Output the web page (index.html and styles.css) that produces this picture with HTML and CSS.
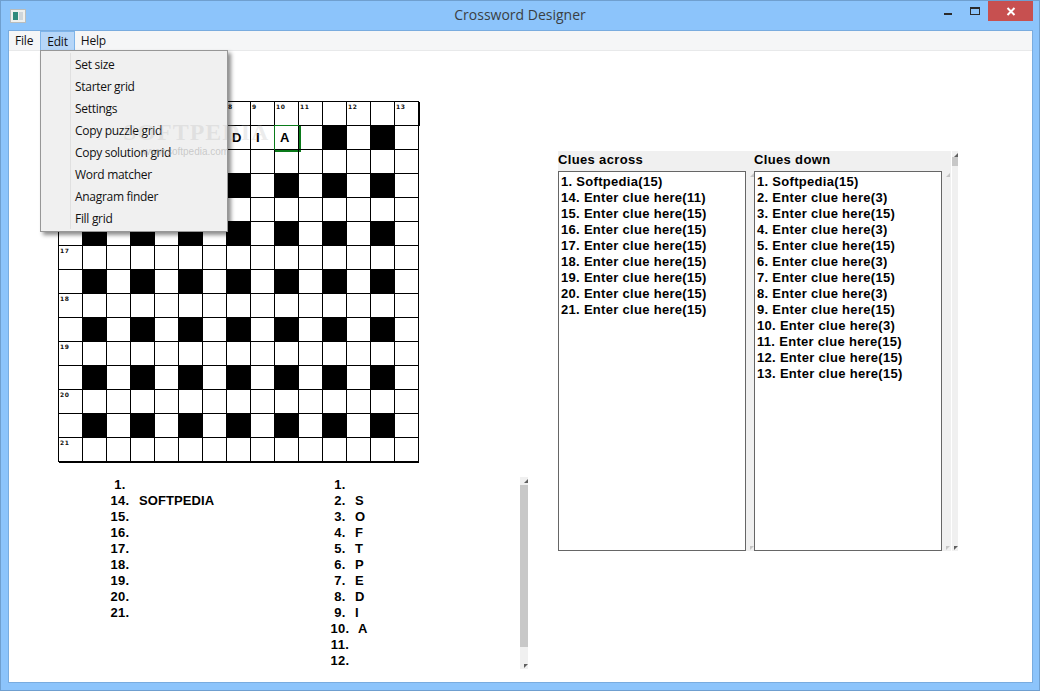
FILE: index.html
```html
<!DOCTYPE html>
<html lang="en">
<head>
<meta charset="utf-8">
<title>Crossword Designer</title>
<link rel="stylesheet" href="styles.css">
</head>
<body>
<div class="window">
  <header class="titlebar">
    <svg class="appicon" width="16" height="14" viewBox="0 0 16 14"><rect x=".5" y=".5" width="15" height="13" fill="#eef0ee" stroke="#b9bdbd"/><rect x="3" y="3" width="5" height="8" fill="#2f8a7c"/><rect x="9" y="3" width="4" height="8" fill="#cfd6da"/></svg>
    <div class="title">Crossword Designer</div>
    <div class="controls">
      <span class="ctl min"></span>
      <span class="ctl max"></span>
      <span class="ctl close"><svg width="10" height="9" viewBox="0 0 10 9"><path d="M1.5 1 8.5 8M8.5 1 1.5 8" stroke="#fff" stroke-width="2" fill="none"/></svg></span>
    </div>
  </header>
  <div class="client">
    <nav class="menubar">
      <span class="mi">File</span>
      <span class="mi active">Edit</span>
      <span class="mi">Help</span>
    </nav>
    <main class="canvas">
      <section class="leftcol">
        <div class="xw">
          <i><u>1</u></i><i><u>2</u></i><i><u>3</u></i><i><u>4</u></i><i><u>5</u></i><i><u>6</u></i><i><u>7</u></i><i><u>8</u></i><i><u>9</u></i><i><u>10</u></i><i><u>11</u></i><i></i><i><u>12</u></i><i></i><i class="edge"><u>13</u></i>
          <i class="top"><u>14</u></i><i class="top">S</i><i class="top">O</i><i class="top">F</i><i class="top">T</i><i class="top">P</i><i class="top">E</i><i class="top">D</i><i class="top">I</i><i class="top sel">A</i><i class="top"></i><i class="top k"></i><i class="top"></i><i class="top k"></i><i class="top"></i>
          <i><u>15</u></i><i></i><i></i><i></i><i></i><i></i><i></i><i></i><i></i><i></i><i></i><i></i><i></i><i></i><i></i>
          <i></i><i class="k"></i><i></i><i class="k"></i><i></i><i class="k"></i><i></i><i class="k"></i><i></i><i class="k"></i><i></i><i class="k"></i><i></i><i class="k"></i><i></i>
          <i><u>16</u></i><i></i><i></i><i></i><i></i><i></i><i></i><i></i><i></i><i></i><i></i><i></i><i></i><i></i><i></i>
          <i></i><i class="k"></i><i></i><i class="k"></i><i></i><i class="k"></i><i></i><i class="k"></i><i></i><i class="k"></i><i></i><i class="k"></i><i></i><i class="k"></i><i></i>
          <i><u>17</u></i><i></i><i></i><i></i><i></i><i></i><i></i><i></i><i></i><i></i><i></i><i></i><i></i><i></i><i></i>
          <i></i><i class="k"></i><i></i><i class="k"></i><i></i><i class="k"></i><i></i><i class="k"></i><i></i><i class="k"></i><i></i><i class="k"></i><i></i><i class="k"></i><i></i>
          <i><u>18</u></i><i></i><i></i><i></i><i></i><i></i><i></i><i></i><i></i><i></i><i></i><i></i><i></i><i></i><i></i>
          <i></i><i class="k"></i><i></i><i class="k"></i><i></i><i class="k"></i><i></i><i class="k"></i><i></i><i class="k"></i><i></i><i class="k"></i><i></i><i class="k"></i><i></i>
          <i><u>19</u></i><i></i><i></i><i></i><i></i><i></i><i></i><i></i><i></i><i></i><i></i><i></i><i></i><i></i><i></i>
          <i></i><i class="k"></i><i></i><i class="k"></i><i></i><i class="k"></i><i></i><i class="k"></i><i></i><i class="k"></i><i></i><i class="k"></i><i></i><i class="k"></i><i></i>
          <i><u>20</u></i><i></i><i></i><i></i><i></i><i></i><i></i><i></i><i></i><i></i><i></i><i></i><i></i><i></i><i></i>
          <i></i><i class="k"></i><i></i><i class="k"></i><i></i><i class="k"></i><i></i><i class="k"></i><i></i><i class="k"></i><i></i><i class="k"></i><i></i><i class="k"></i><i></i>
          <i class="last"><u>21</u></i><i class="last"></i><i class="last"></i><i class="last"></i><i class="last"></i><i class="last"></i><i class="last"></i><i class="last"></i><i class="last"></i><i class="last"></i><i class="last"></i><i class="last"></i><i class="last"></i><i class="last"></i><i class="last"></i>
        </div>
        <div class="answers">
          <div class="alist across">
            <span>1.</span><span></span>
            <span>14.</span><span>SOFTPEDIA</span>
            <span>15.</span><span></span>
            <span>16.</span><span></span>
            <span>17.</span><span></span>
            <span>18.</span><span></span>
            <span>19.</span><span></span>
            <span>20.</span><span></span>
            <span>21.</span><span></span>
          </div>
          <div class="alist down">
            <span>1.</span><span></span>
            <span>2.</span><span>S</span>
            <span>3.</span><span>O</span>
            <span>4.</span><span>F</span>
            <span>5.</span><span>T</span>
            <span>6.</span><span>P</span>
            <span>7.</span><span>E</span>
            <span>8.</span><span>D</span>
            <span>9.</span><span>I</span>
            <span>10.</span><span class="wide">A</span>
            <span>11.</span><span></span>
            <span>12.</span><span></span>
          </div>
          <div class="sb answersb"><b class="up"></b><b class="thumb"></b><b class="dn"></b></div>
        </div>
      </section>
      <section class="clues">
        <div class="cluecols">
          <div class="cluecol">
            <h2>Clues across</h2>
            <div class="cluewrap">
              <ul class="box">
                <li>1. Softpedia(15)</li>
                <li>14. Enter clue here(11)</li>
                <li>15. Enter clue here(15)</li>
                <li>16. Enter clue here(15)</li>
                <li>17. Enter clue here(15)</li>
                <li>18. Enter clue here(15)</li>
                <li>19. Enter clue here(15)</li>
                <li>20. Enter clue here(15)</li>
                <li>21. Enter clue here(15)</li>
              </ul>
              <div class="sb inner"><b class="up"></b><b class="dn"></b></div>
            </div>
          </div>
          <div class="cluecol">
            <h2>Clues down</h2>
            <div class="cluewrap">
              <ul class="box">
                <li>1. Softpedia(15)</li>
                <li>2. Enter clue here(3)</li>
                <li>3. Enter clue here(15)</li>
                <li>4. Enter clue here(3)</li>
                <li>5. Enter clue here(15)</li>
                <li>6. Enter clue here(3)</li>
                <li>7. Enter clue here(15)</li>
                <li>8. Enter clue here(3)</li>
                <li>9. Enter clue here(15)</li>
                <li>10. Enter clue here(3)</li>
                <li>11. Enter clue here(15)</li>
                <li>12. Enter clue here(15)</li>
                <li>13. Enter clue here(15)</li>
              </ul>
              <div class="sb inner"><b class="up"></b><b class="dn"></b></div>
            </div>
          </div>
        </div>
        <div class="sb outer"><b class="up"></b><b class="thumb"></b><b class="dn"></b></div>
      </section>
    </main>
    <div class="menu">
      <div>Set size</div>
      <div>Starter grid</div>
      <div>Settings</div>
      <div>Copy puzzle grid</div>
      <div>Copy solution grid</div>
      <div>Word matcher</div>
      <div>Anagram finder</div>
      <div>Fill grid</div>
    </div>
    <div class="wm">SOFTPEDIA<small>www.softpedia.com</small></div>
  </div>
</div>
</body>
</html>
```

FILE: styles.css
```css
* { box-sizing: border-box; }
html, body { margin: 0; height: 100%; }
body { overflow: hidden; background: #8cc4fb; }

.window {
  width: 1040px;
  height: 691px;
  display: flex;
  flex-direction: column;
  background: #8cc4fb;
  border: 1px solid #6f9fcf;
  padding: 0 7px 7px;
}

.titlebar {
  height: 29px;
  flex: none;
  display: flex;
  align-items: flex-start;
  position: relative;
}
.appicon { margin: 8px 0 0 2px; }
.title {
  position: absolute;
  left: 0;
  right: 0;
  top: 4px;
  text-align: center;
  font: 14px/20px "Open Sans", sans-serif;
  color: #3a3f44;
}
.controls {
  margin-left: auto;
  display: flex;
  align-items: flex-start;
  margin-right: -1px;
}
.ctl { display: flex; align-items: center; justify-content: center; }
.min { width: 8px; height: 2px; background: #2b2b2b; margin-top: 12px; margin-right: 18px; }
.max { width: 10px; height: 8px; border: 1px solid #2b2b2b; border-top-width: 2px; margin-top: 6px; margin-right: 8px; }
.close { width: 45px; height: 20px; background: #c75050; }

.client {
  flex: 1;
  position: relative;
  background: #fff;
  border: 1px solid #79acdf;
  display: flex;
  flex-direction: column;
  overflow: hidden;
  margin: 0 -1px 0 0;
}

.menubar {
  height: 19px;
  flex: none;
  display: flex;
  background: #f5f6f7;
  border-bottom: 1px solid #e8e9ea;
  box-sizing: content-box;
  font: 12px/20px "Open Sans", sans-serif;
  letter-spacing: -.2px;
  color: #111;
}
.mi { padding: 0 7px 0 6px; height: 19px; }
.mi.active { background: #b6d6f8; border: 1px solid #7db4ea; border-bottom: 0; padding: 0 6px; line-height: 19px; }
.mi:last-child { padding-left: 6px; }

.canvas { flex: 1; display: flex; min-height: 0; }

.leftcol { width: 549px; flex: none; padding: 50px 0 0 49px; }

.xw {
  display: grid;
  grid-template-columns: repeat(15, 24px);
  grid-auto-rows: 24px;
  width: 361px;
  border-left: 1px solid #000;
  border-top: 1px solid #000;
}
.xw i {
  display: block;
  position: relative;
  padding-left: 5px;
  border-right: 1px solid #000;
  border-bottom: 1px solid #000;
  font: bold 13px/24px "Liberation Sans", sans-serif;
  color: #000;
  text-align: left;
}
.xw i.top { box-shadow: 0 -1px 0 #000; }
.xw i.edge { box-shadow: 1px 0 0 #000; }
.xw i.last { box-shadow: 0 1px 0 #000; }
.xw i.k { background: #000; }
.xw i.sel { box-shadow: none; }
.xw i.sel::after {
  content: "";
  position: absolute;
  left: -1px;
  top: -1px;
  width: 24px;
  height: 24px;
  border: 1px solid #0a7a1a;
  border-right-width: 2px;
  border-bottom-width: 2px;
}
.xw u {
  position: absolute;
  left: 1px;
  top: 0;
  font: bold 6px/9px "DejaVu Sans", sans-serif;
  letter-spacing: .6px;
  text-decoration: none;
  color: #111;
}

.answers {
  display: flex;
  margin-top: 15px;
  padding-left: 42px;
  height: 192px;
  position: relative;
  font: bold 13px/16px "Liberation Sans", sans-serif;
  color: #000;
  letter-spacing: .3px;
}
.alist {
  display: grid;
  grid-template-columns: 40px 1fr;
  grid-auto-rows: 16px;
  align-content: start;
  text-align: center;
}
.alist span:nth-child(even) { text-align: left; }
.across { width: 220px; }
.across span:nth-child(even) { margin-left: -1px; letter-spacing: .1px; }
.down { width: 200px; }
.down span:nth-child(even) { margin-left: -5px; }
.down span.wide { margin-left: -2px; }

.sb { display: flex; flex-direction: column; background: #f0f0f0; position: relative; }
.sb .up, .sb .dn { display: block; flex: none; }
.answersb { width: 8px; height: 192px; }
.answersb .up { height: 8px; position: relative; }
.answersb .thumb { height: 162px; background: #c8c8c8; display: block; }
.sb .up::after, .sb .dn::after {
  content: "";
  position: absolute;
  right: 0;
  width: 0;
  height: 0;
  border-left: 4px solid transparent;
}
.sb .up::after { top: 2px; border-bottom: 4px solid #606060; }
.sb .dn::after { bottom: 1px; border-top: 4px solid #606060; border-left: 0; border-right: 4px solid transparent; }
.sb.inner .up::after, .sb.inner .dn::after { border-bottom-color: #c4c4c4; border-top-color: #c4c4c4; }

.clues { display: flex; margin-top: 100px; width: 400px; height: 400px; flex: none; }
.cluecols { display: flex; width: 393px; background: #f0f0f0; align-items: stretch; }
.cluecol { width: 196px; display: flex; flex-direction: column; }
.cluecol h2 {
  margin: 0;
  height: 20px;
  font: bold 13px/17px "Liberation Sans", sans-serif;
  letter-spacing: .35px;
  color: #000;
  background: #f0f0f0;
}
.cluewrap { flex: 1; display: flex; background: #fff; }
.box {
  list-style: none;
  margin: 0;
  padding: 2px 0 0 2px;
  width: 188px;
  height: 380px;
  background: #fff;
  border: 1px solid #666;
  font: bold 13px/16px "Liberation Sans", sans-serif;
  letter-spacing: .3px;
  color: #000;
  white-space: nowrap;
}
.sb.inner { width: 8px; height: 380px; background: #f0f0f0; justify-content: space-between; }
.sb.outer { width: 7px; height: 400px; border-left: 1px solid #fff; }
.sb.outer .up { height: 6px; }
.sb.outer .thumb { height: 9px; width: 6px; background: #c8c8c8; display: block; }
.sb.outer .dn { margin-top: auto; height: 6px; }
.sb.inner .up, .sb.inner .dn { height: 6px; position: relative; }
.sb.outer .up, .sb.outer .dn, .answersb .dn { position: relative; }
.answersb .dn { margin-top: auto; height: 6px; }

.menu {
  position: absolute;
  left: 31px;
  top: 19px;
  width: 188px;
  height: 182px;
  padding: 2.5px 0 0 34px;
  background: #f0f0f0 linear-gradient(#e0e0e0, #e0e0e0) no-repeat 29px 2px / 1px 176px;
  border: 1px solid #979797;
  box-shadow: 3px 3px 4px rgba(0, 0, 0, .45);
  font: 12px/22px "Open Sans", sans-serif;
  letter-spacing: -.3px;
  color: #111;
  z-index: 2;
}

.wm {
  position: absolute;
  left: 114px;
  top: 88px;
  z-index: 3;
  font: bold 24px/26px "Liberation Serif", serif;
  letter-spacing: 1px;
  color: rgba(170, 170, 170, .22);
  pointer-events: none;
}
.wm small {
  display: block;
  font: 10px/11px "Liberation Sans", sans-serif;
  margin: 1px 0 0 20px;
  letter-spacing: 0;
  color: rgba(150, 150, 150, .45);
}
```
